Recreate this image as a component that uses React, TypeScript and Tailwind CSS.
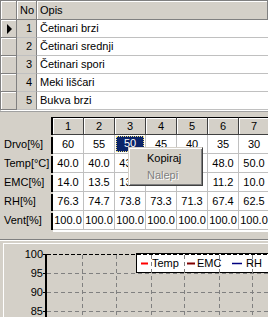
import React from "react";

const opisRows = [
  ["1", "Četinari brzi"],
  ["2", "Četinari srednji"],
  ["3", "Četinari spori"],
  ["4", "Meki lišćari"],
  ["5", "Bukva brzi"],
];

// cells hidden under the popup menu are left empty
const paramRows: [string, string[]][] = [
  ["Drvo[%]", ["60", "55", "50", "45", "40", "35", "30"]],
  ["Temp[°C]", ["40.0", "40.0", "43.0", "", "", "48.0", "50.0"]],
  ["EMC[%]", ["14.0", "13.5", "13.2", "12.6", "12.2", "11.2", "10.0"]],
  ["RH[%]", ["76.3", "74.7", "73.8", "73.3", "71.3", "67.4", "62.5"]],
  ["Vent[%]", ["100.0", "100.0", "100.0", "100.0", "100.0", "100.0", "100.0"]],
];

const fixedCell = "bg-[#d4d0c8] border-r border-b border-[#808080] shadow-[inset_1px_1px_0_#fff]";

export default function App() {
  return (
    <div className="relative w-[268px] h-[317px] overflow-hidden bg-[#d4d0c8] text-black font-['Liberation_Sans',Arial,sans-serif] text-[11px] flex flex-col">
      {/* Top grid */}
      <div className="h-[111px] shrink-0 border-t border-l border-[#808080] border-b border-b-white bg-white flex flex-col overflow-hidden">
        <div className="h-[19px] flex shrink-0">
          <div className={`w-[16px] shrink-0 ${fixedCell}`} />
          <div className={`w-[20px] shrink-0 text-right pr-[2px] leading-[18px] ${fixedCell}`}>No</div>
          <div className={`flex-1 pl-[3px] leading-[18px] ${fixedCell}`}>Opis</div>
        </div>
        {opisRows.map(([no, opis], i) => (
          <div key={no} className="h-[18px] flex shrink-0">
            <div className={`w-[16px] shrink-0 ${fixedCell}`}>
              {i === 0 && (
                <svg width="15" height="17" viewBox="0 0 15 17">
                  <polygon points="6,4 11,9 6,14" fill="#000" />
                </svg>
              )}
            </div>
            <div className="w-[20px] shrink-0 bg-[#d4d0c8] border-r border-[#808080] border-b border-b-[#c0c0c0] text-right pr-[4px] leading-[17px]">
              {no}
            </div>
            <div className="flex-1 bg-white border-b border-[#c0c0c0] pl-[3px] leading-[17px]">{opis}</div>
          </div>
        ))}
      </div>

      {/* Parameter grid */}
      <div className="h-[128px] shrink-0 border-t border-[#a0a0a0] pt-[5px] overflow-hidden flex flex-col">
        <div className="h-[18px] flex shrink-0">
          <div className="w-[51px] shrink-0" />
          <div className="w-[2px] shrink-0 bg-black" />
          {["1", "2", "3", "4", "5", "6", "7"].map((h) => (
            <div
              key={h}
              className="w-[31px] shrink-0 text-center leading-[16px] bg-[#d4d0c8] border-t border-t-black border-r border-b border-[#404040] shadow-[inset_1px_1px_0_#fff]"
            >
              {h}
            </div>
          ))}
        </div>
        {paramRows.map(([label, vals], r) => (
          <div key={label} className="h-[19px] flex shrink-0">
            <div className="w-[51px] shrink-0 pl-[4px] leading-[19px] whitespace-nowrap">{label}</div>
            <div className="w-[2px] shrink-0 bg-black mt-[2px]" />
            {vals.map((v, c) =>
              r === 0 && c === 2 ? (
                <div key={c} className="w-[31px] shrink-0 bg-white border-r border-b border-[#c0c0c0] p-[1px]">
                  <div className="h-full bg-[#0a246a] text-white text-center leading-[15px] outline-1 outline-dotted outline-[#f0e080] -outline-offset-1">
                    {v}
                  </div>
                </div>
              ) : (
                <div key={c} className="w-[31px] shrink-0 bg-white border-r border-b border-[#c0c0c0] text-center leading-[18px]">
                  {v}
                </div>
              )
            )}
          </div>
        ))}
        <div className="h-[2px] flex shrink-0">
          <div className="w-[53px] shrink-0" />
          <div className="flex-1 bg-white" />
        </div>
      </div>

      {/* Chart panel */}
      <div className="flex-1 border-t border-[#808080]">
        <div className="h-full border-t border-white pt-[2px] pl-[3px]">
          <div className="h-full border-t border-l border-white">
            <svg width="264" height="73" viewBox="4 244 264 73" className="block">
              <g fontFamily="Liberation Sans, Arial, sans-serif" fontSize="11" fill="#000">
                <text x="43" y="258" textAnchor="end">100</text>
                <text x="43" y="277" textAnchor="end">95</text>
                <text x="43" y="296" textAnchor="end">90</text>
                <text x="43" y="315" textAnchor="end">85</text>
              </g>
              {[254, 273, 292, 311].map((y) => (
                <line key={y} x1="43" x2="46" y1={y + 0.5} y2={y + 0.5} stroke="#000" />
              ))}
              {[273, 292, 311].map((y) => (
                <line key={y} x1="47" x2="268" y1={y + 0.5} y2={y + 0.5} stroke="#808080" strokeDasharray="4 3" />
              ))}
              <rect x="136.5" y="253.5" width="140" height="19" fill="#fff" stroke="#000" />
              <line x1="47" x2="268" y1="254.5" y2="254.5" stroke="#000" strokeDasharray="4 2" />
              {[82, 116, 151, 184, 219, 252].map((x) => (
                <line key={x} x1={x + 0.5} x2={x + 0.5} y1="255" y2="317" stroke="#808080" strokeDasharray="4 3" />
              ))}
              <rect x="45" y="254" width="2" height="63" fill="#000" />
              <line x1="141" x2="148" y1="263.5" y2="263.5" stroke="#ff0000" strokeWidth="2" />
              <line x1="187" x2="195" y1="263.5" y2="263.5" stroke="#800000" strokeWidth="2" />
              <line x1="232" x2="242" y1="263.5" y2="263.5" stroke="#000080" strokeWidth="1.5" />
              <g fontFamily="Liberation Sans, Arial, sans-serif" fontSize="11" fill="#000">
                <text x="152" y="267">Temp</text>
                <text x="197" y="267">EMC</text>
                <text x="246" y="267">RH</text>
              </g>
            </svg>
          </div>
        </div>
      </div>

      {/* Context menu */}
      <div className="absolute left-[128px] top-[147px] w-[75px] h-[39px] bg-[#d4d0c8] border border-t-[#d4d0c8] border-l-[#d4d0c8] border-r-[#404040] border-b-[#404040] shadow-[inset_1px_1px_0_#fff,inset_-1px_-1px_0_#808080] pt-[2px]">
        <div className="h-[17px] pl-[18px] leading-[17px]">Kopiraj</div>
        <div className="h-[17px] pl-[18px] leading-[17px] text-[#808080] [text-shadow:1px_1px_0_#fff]">Nalepi</div>
      </div>
    </div>
  );
}
